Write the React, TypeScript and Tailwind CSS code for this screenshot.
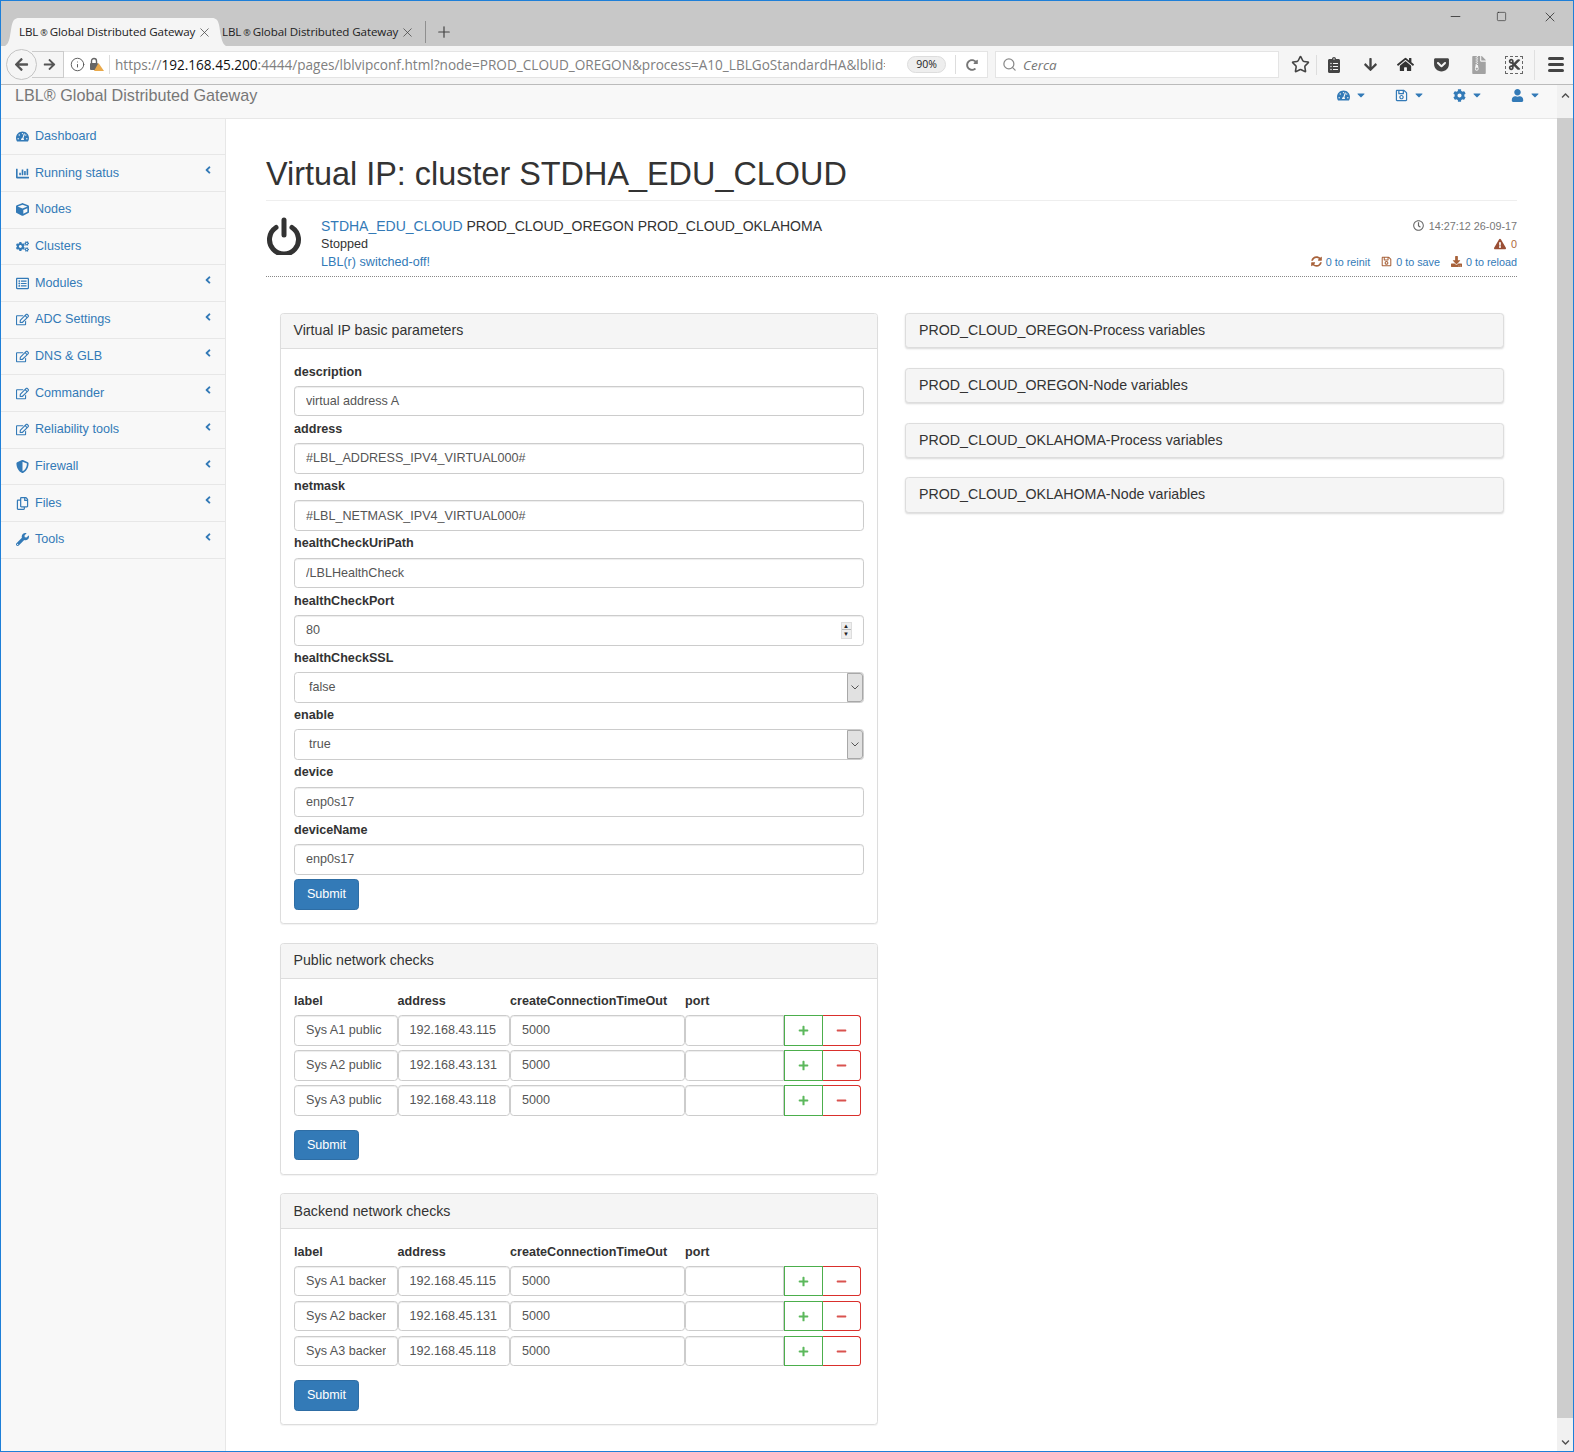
import type { ReactNode } from "react";
import {
  FaAngleLeft, FaArrowDown, FaArrowLeft, FaArrowRight, FaCaretDown, FaChartBar, FaClipboardList, FaCog, FaCogs,
  FaCube, FaCut, FaDownload, FaExclamationTriangle, FaFileArchive, FaGetPocket, FaHome, FaMinus, FaPlus,
  FaRedoAlt, FaRegClock, FaRegCopy, FaRegEdit, FaRegListAlt, FaRegSave, FaShieldAlt, FaSyncAlt, FaTachometerAlt,
  FaUser, FaWrench, FaChevronUp, FaChevronDown,
} from "react-icons/fa";
import { Info, Search, Star, X, Plus, Minus, Square } from "lucide-react";

const menu = [
  { label: "Dashboard", icon: <FaTachometerAlt />, sub: false },
  { label: "Running status", icon: <FaChartBar />, sub: true },
  { label: "Nodes", icon: <FaCube />, sub: false },
  { label: "Clusters", icon: <FaCogs />, sub: false },
  { label: "Modules", icon: <FaRegListAlt />, sub: true },
  { label: "ADC Settings", icon: <FaRegEdit />, sub: true },
  { label: "DNS & GLB", icon: <FaRegEdit />, sub: true },
  { label: "Commander", icon: <FaRegEdit />, sub: true },
  { label: "Reliability tools", icon: <FaRegEdit />, sub: true },
  { label: "Firewall", icon: <FaShieldAlt />, sub: true },
  { label: "Files", icon: <FaRegCopy />, sub: true },
  { label: "Tools", icon: <FaWrench />, sub: true },
];

const inputClass =
  "block h-[30.6px] w-full rounded-[3.6px] border border-[#ccc] bg-white px-[11px] text-[12.6px] text-[#555] shadow-[inset_0_1px_1px_rgba(0,0,0,0.075)] outline-none";

const TabFlare = ({ flip }: { flip?: boolean }) => (
  <svg width="14" height="28" viewBox="0 0 14 28" className={flip ? "-scale-x-100" : ""}>
    <path d="M14 0C6 0 7 9 5 18 4 24 2 27 0 28h14z" fill="#f5f5f5" />
  </svg>
);

const Tab = ({ active }: { active?: boolean }) => (
  <div className={`flex h-[28px] w-[193px] items-center justify-between ${active ? "bg-[#f5f5f5]" : ""}`}>
    <span className="whitespace-nowrap font-['Open_Sans',sans-serif] text-[11.6px] text-[#222] tracking-[-0.1px]">
      LBL<span className="mx-[2px] text-[9px]">®</span>Global Distributed Gateway
    </span>
    <X size={15} strokeWidth={1.2} className="text-[#444]" />
  </div>
);

const Panel = ({ title, children }: { title: string; children: ReactNode }) => (
  <div className="mb-[18.5px] rounded-[3.6px] border border-[#ddd] bg-white shadow-[0_1px_1px_rgba(0,0,0,0.05)]">
    <div className="flex h-[35px] items-center rounded-t-[3px] border-b border-[#ddd] bg-[#f5f5f5] px-[13px] text-[14.2px] text-[#333]">
      {title}
    </div>
    <div className="p-[13.5px]">{children}</div>
  </div>
);

const Label = ({ children }: { children: ReactNode }) => (
  <div className="flex h-[23.3px] items-start text-[12.6px] leading-[18px] font-bold text-[#333]">{children}</div>
);

const Field = ({ label, value }: { label: string; value: string }) => (
  <div className="mb-[3.4px]">
    <Label>{label}</Label>
    <input readOnly value={value} className={inputClass} />
  </div>
);

const PortField = ({ label, value }: { label: string; value: string }) => (
  <div className="mb-[3.4px]">
    <Label>{label}</Label>
    <div className={`${inputClass} flex items-center justify-between`}>
      <span>{value}</span>
      <span className="flex h-[17px] w-[11px] flex-col border border-[#ddd] bg-[#eee] text-[#222]">
        <span className="flex h-1/2 items-center justify-center border-b border-[#bbb] text-[6px] leading-none">▲</span>
        <span className="flex h-1/2 items-center justify-center text-[6px] leading-none">▼</span>
      </span>
    </div>
  </div>
);

const SelectField = ({ label, value }: { label: string; value: string }) => (
  <div className="mb-[3.4px]">
    <Label>{label}</Label>
    <div className="flex h-[30.6px] items-stretch rounded-[3.6px] border border-[#ccc] bg-white text-[12.6px] text-[#555]">
      <span className="flex flex-1 items-center pl-[14px]">{value}</span>
      <span className="flex w-[16px] items-center justify-center rounded-r-[3px] border border-[#a8a8a8] bg-[#e1e1e1]">
        <svg width="8" height="5" viewBox="0 0 8 5" fill="none" stroke="#555" strokeWidth="1">
          <path d="M.5.5 4 4 7.5.5" />
        </svg>
      </span>
    </div>
  </div>
);

const SubmitButton = () => (
  <button className="flex h-[30.6px] w-[65px] items-center justify-center rounded-[3.6px] border border-[#2e6da4] bg-[#337ab7] text-[12.6px] text-white">
    Submit
  </button>
);

const checkCols = "grid grid-cols-[103.5px_112.5px_175px_99px_38.5px_38.5px]";

const ChecksTable = ({ rows }: { rows: string[][] }) => (
  <div>
    <div className={`${checkCols} h-[23px] text-[12.6px] leading-[18px] font-bold text-[#333]`}>
      <span>label</span>
      <span>address</span>
      <span>createConnectionTimeOut</span>
      <span className="col-span-3">port</span>
    </div>
    {rows.map((r) => (
      <div key={r[0]} className={`${checkCols} mb-[4.4px] h-[30.6px]`}>
        <input readOnly value={r[0]} className={inputClass} />
        <input readOnly value={r[1]} className={inputClass} />
        <input readOnly value="5000" className={inputClass} />
        <input readOnly value="" className={`${inputClass} rounded-r-none`} />
        <div className="flex items-center justify-center border border-[#4cae4c] bg-white text-[11px] text-[#5cb85c]">
          <FaPlus />
        </div>
        <div className="flex items-center justify-center rounded-r-[3.6px] border border-l-0 border-[#d9302c] bg-white text-[11px] text-[#d9534f]">
          <FaMinus />
        </div>
      </div>
    ))}
    <div className="pt-[9.6px]">
      <SubmitButton />
    </div>
  </div>
);

const NavMenu = ({ icon }: { icon: ReactNode }) => (
  <span className="flex w-[58px] items-center gap-[5px] text-[#337ab7]">
    <span className="text-[13px]">{icon}</span>
    <FaCaretDown className="text-[12px]" />
  </span>
);

const CountLink = ({ icon, text }: { icon: ReactNode; text: string }) => (
  <span className="ml-[11px] flex items-center gap-[4px] text-[#337ab7]">
    <span className="text-[11px] text-[#a8623a]">{icon}</span>
    {text}
  </span>
);

const publicRows = [
  ["Sys A1 public", "192.168.43.115"],
  ["Sys A2 public", "192.168.43.131"],
  ["Sys A3 public", "192.168.43.118"],
];
const backendRows = [
  ["Sys A1 backend", "192.168.45.115"],
  ["Sys A2 backend", "192.168.45.131"],
  ["Sys A3 backend", "192.168.45.118"],
];
const sidePanels = [
  "PROD_CLOUD_OREGON-Process variables",
  "PROD_CLOUD_OREGON-Node variables",
  "PROD_CLOUD_OKLAHOMA-Process variables",
  "PROD_CLOUD_OKLAHOMA-Node variables",
];

export default function App() {
  return (
    <div className="flex h-[1452px] w-[1574px] flex-col overflow-hidden border border-[#1e7fd8] bg-white font-['Liberation_Sans',Arial,sans-serif]">
      {/* title bar + tabs */}
      <div className="flex h-[45px] shrink-0 items-end bg-[#c8c8c8] pl-[4px]">
        <TabFlare />
        <Tab active />
        <TabFlare flip />
        <div className="ml-[-4px] flex h-[28px] items-center">
          <Tab />
          <span className="ml-[10px] h-[22px] w-px bg-[#8f8f8f]" />
          <Plus size={18} strokeWidth={1.6} className="ml-[9px] text-[#444]" />
        </div>
        <div className="ml-auto flex h-full items-start self-start pt-[8px] pr-[15px] text-[#222]">
          <Minus size={15} strokeWidth={1.2} />
          <Square size={11} strokeWidth={1.3} className="mt-[2px] ml-[33px]" />
          <X size={16} strokeWidth={1.1} className="ml-[35px]" />
        </div>
      </div>

      {/* browser toolbar */}
      <div className="flex h-[38.5px] shrink-0 items-center border-b border-[#bbb] bg-[#f5f5f5] pl-[5px]">
        <div className="z-10 flex h-[31px] w-[31px] items-center justify-center rounded-full border border-[#c4c4c4] bg-[#f5f5f5] text-[15px] text-[#555]">
          <FaArrowLeft />
        </div>
        <div className="ml-[-5px] flex h-[27px] w-[32px] items-center justify-center border border-l-0 border-[#ccc] bg-[#f5f5f5] pl-[4px] text-[13px] text-[#555]">
          <FaArrowRight />
        </div>
        <div className="flex h-[27px] w-[924px] items-center border-y border-r border-[#e4e4e4] bg-white">
          <Info size={15} strokeWidth={1.5} className="ml-[6px] text-[#555]" />
          <span className="relative ml-[4px] w-[15px] text-[12px] text-[#666]">
            <svg width="15" height="15" viewBox="0 0 15 15">
              <rect x="1" y="6" width="8" height="7" rx="1" fill="#666" />
              <path d="M2.5 6V4a2.5 2.5 0 0 1 5 0v2" fill="none" stroke="#666" strokeWidth="1.4" />
              <path d="M9.5 6 15 14H5z" fill="#e9a94b" />
            </svg>
          </span>
          <span className="ml-[5px] h-[19px] w-px bg-[#ddd]" />
          <span className="ml-[5px] w-[770px] overflow-hidden font-['Open_Sans',sans-serif] text-[13.6px] whitespace-nowrap text-[#808080]">
            https://<span className="text-[#111]">192.168.45.200</span>:4444/pages/lblvipconf.html?node=PROD_CLOUD_OREGON&process=A10_LBLGoStandardHA&lblid=
          </span>
          <span className="ml-[22px] flex h-[17px] w-[39px] items-center justify-center rounded-full border border-[#ddd] bg-[#eee] font-['Open_Sans',sans-serif] text-[10.5px] text-[#222]">
            90%
          </span>
          <span className="ml-[9px] h-[19px] w-px bg-[#ddd]" />
          <FaRedoAlt className="ml-[10px] text-[12px] text-[#777]" />
        </div>
        <div className="ml-[7px] flex h-[27px] w-[284px] items-center border border-[#e4e4e4] bg-white text-[#8a8a8a]">
          <Search size={15} strokeWidth={2} className="ml-[6px]" />
          <span className="ml-[6px] font-['Open_Sans',sans-serif] text-[13.5px] italic text-[#777]">Cerca</span>
        </div>
        <Star size={19} strokeWidth={2} className="ml-[12px] text-[#444]" />
        <span className="ml-[6px] h-[20px] w-px bg-[#ddd]" />
        <FaClipboardList className="ml-[9px] text-[16px] text-[#444]" />
        <FaArrowDown className="ml-[21px] text-[15px] text-[#444]" />
        <FaHome className="ml-[19px] text-[17px] text-[#333]" />
        <FaGetPocket className="ml-[19px] text-[17px] text-[#444]" />
        <FaFileArchive className="ml-[20px] text-[18px] text-[#a2a2a2]" />
        <span className="ml-[17px] flex h-[18px] w-[18px] items-center justify-center border border-dashed border-[#666] text-[13px] text-[#444]">
          <FaCut />
        </span>
        <span className="ml-[11px] h-[30px] w-px bg-[#e0e0e0]" />
        <span className="ml-[13px] flex flex-col gap-[3px]">
          <span className="h-[3px] w-[16px] rounded-sm bg-[#444]" />
          <span className="h-[3px] w-[16px] rounded-sm bg-[#444]" />
          <span className="h-[3px] w-[16px] rounded-sm bg-[#444]" />
        </span>
      </div>

      <div className="flex min-h-0 flex-1">
        <div className="flex min-w-0 flex-1 flex-col">
          {/* app navbar */}
          <div className="flex h-[34px] shrink-0 items-start justify-between border-b border-[#e7e7e7] bg-[#f8f8f8] pl-[14px]">
            <span className="text-[16.2px] leading-[21px] text-[#777]">LBL® Global Distributed Gateway</span>
            <div className="mt-[4px] mr-[-12px] flex">
              <NavMenu icon={<FaTachometerAlt />} />
              <NavMenu icon={<FaRegSave />} />
              <NavMenu icon={<FaCog />} />
              <NavMenu icon={<FaUser />} />
            </div>
          </div>

          <div className="flex min-h-0 flex-1">
            {/* sidebar */}
            <aside className="w-[225px] shrink-0 border-r border-[#e7e7e7] bg-[#f8f8f8] text-[12.6px] text-[#337ab7]">
              {menu.map((m) => (
                <div key={m.label} className="flex h-[36.7px] items-center border-b border-[#e7e7e7] pl-[15px]">
                  <span className="flex w-[19px] text-[13px]">{m.icon}</span>
                  <span>{m.label}</span>
                  {m.sub && <FaAngleLeft className="mt-[-6px] mr-[11px] ml-auto text-[12px]" />}
                </div>
              ))}
            </aside>

            {/* page */}
            <main className="min-w-0 flex-1 px-[40px]">
              <h1 className="border-b border-[#eee] pt-[35px] pb-[6px] text-[32.4px] leading-[40px] font-normal text-[#333]">
                Virtual IP: cluster STDHA_EDU_CLOUD
              </h1>
              <div className="flex h-[76px] border-b border-dotted border-[#888] pt-[16px]">
                <svg width="36" height="38" viewBox="0 0 36 38" fill="none" stroke="#333" strokeWidth="5" strokeLinecap="round" className="shrink-0">
                  <path d="M10 10.5a14.5 14.5 0 1 0 16 0" />
                  <path d="M18 3v15" />
                </svg>
                <div className="ml-[19px] text-[12.6px] leading-[18px] text-[#333]">
                  <div className="text-[14px]">
                    <span className="text-[#337ab7]">STDHA_EDU_CLOUD</span> PROD_CLOUD_OREGON PROD_CLOUD_OKLAHOMA
                  </div>
                  <div>Stopped</div>
                  <div className="text-[#337ab7]">LBL(r) switched-off!</div>
                </div>
                <div className="ml-auto flex flex-col items-end text-[10.8px] leading-[18px] text-[#777]">
                  <span className="flex items-center gap-[5px]">
                    <FaRegClock className="text-[11px] text-[#666]" />
                    14:27:12 26-09-17
                  </span>
                  <span className="flex items-center gap-[5px] text-[#b0693b]">
                    <FaExclamationTriangle className="text-[12px] text-[#9a4f35]" />0
                  </span>
                  <span className="flex items-center">
                    <CountLink icon={<FaSyncAlt />} text="0 to reinit" />
                    <CountLink icon={<FaRegSave />} text="0 to save" />
                    <CountLink icon={<FaDownload />} text="0 to reload" />
                  </span>
                </div>
              </div>

              <div className="grid grid-cols-2 pt-[36.5px]">
                <div className="px-[13.5px]">
                  <Panel title="Virtual IP basic parameters">
                    <Field label="description" value="virtual address A" />
                    <Field label="address" value="#LBL_ADDRESS_IPV4_VIRTUAL000#" />
                    <Field label="netmask" value="#LBL_NETMASK_IPV4_VIRTUAL000#" />
                    <Field label="healthCheckUriPath" value="/LBLHealthCheck" />
                    <PortField label="healthCheckPort" value="80" />
                    <SelectField label="healthCheckSSL" value="false" />
                    <SelectField label="enable" value="true" />
                    <Field label="device" value="enp0s17" />
                    <Field label="deviceName" value="enp0s17" />
                    <div className="pt-[1px]">
                      <SubmitButton />
                    </div>
                  </Panel>
                  <Panel title="Public network checks">
                    <ChecksTable rows={publicRows} />
                  </Panel>
                  <Panel title="Backend network checks">
                    <ChecksTable rows={backendRows} />
                  </Panel>
                </div>
                <div className="flex flex-col gap-[19.5px] px-[13.5px]">
                  {sidePanels.map((p) => (
                    <div
                      key={p}
                      className="flex h-[35.3px] items-center rounded-[3.6px] border border-[#ddd] bg-[#f5f5f5] px-[13px] text-[14.2px] text-[#333] shadow-[0_1px_2px_rgba(0,0,0,0.15)]"
                    >
                      {p}
                    </div>
                  ))}
                </div>
              </div>
            </main>
          </div>
        </div>

        {/* page scrollbar */}
        <div className="flex w-[16px] shrink-0 flex-col bg-[#f1f1f1] text-[#505050]">
          <div className="flex h-[33px] justify-center pt-[6px] text-[9px]">
            <FaChevronUp />
          </div>
          <div className="h-[1300px] bg-[#cdcdcd]" />
          <div className="flex flex-1 items-end justify-center pb-[4px] text-[9px]">
            <FaChevronDown />
          </div>
        </div>
      </div>
    </div>
  );
}
